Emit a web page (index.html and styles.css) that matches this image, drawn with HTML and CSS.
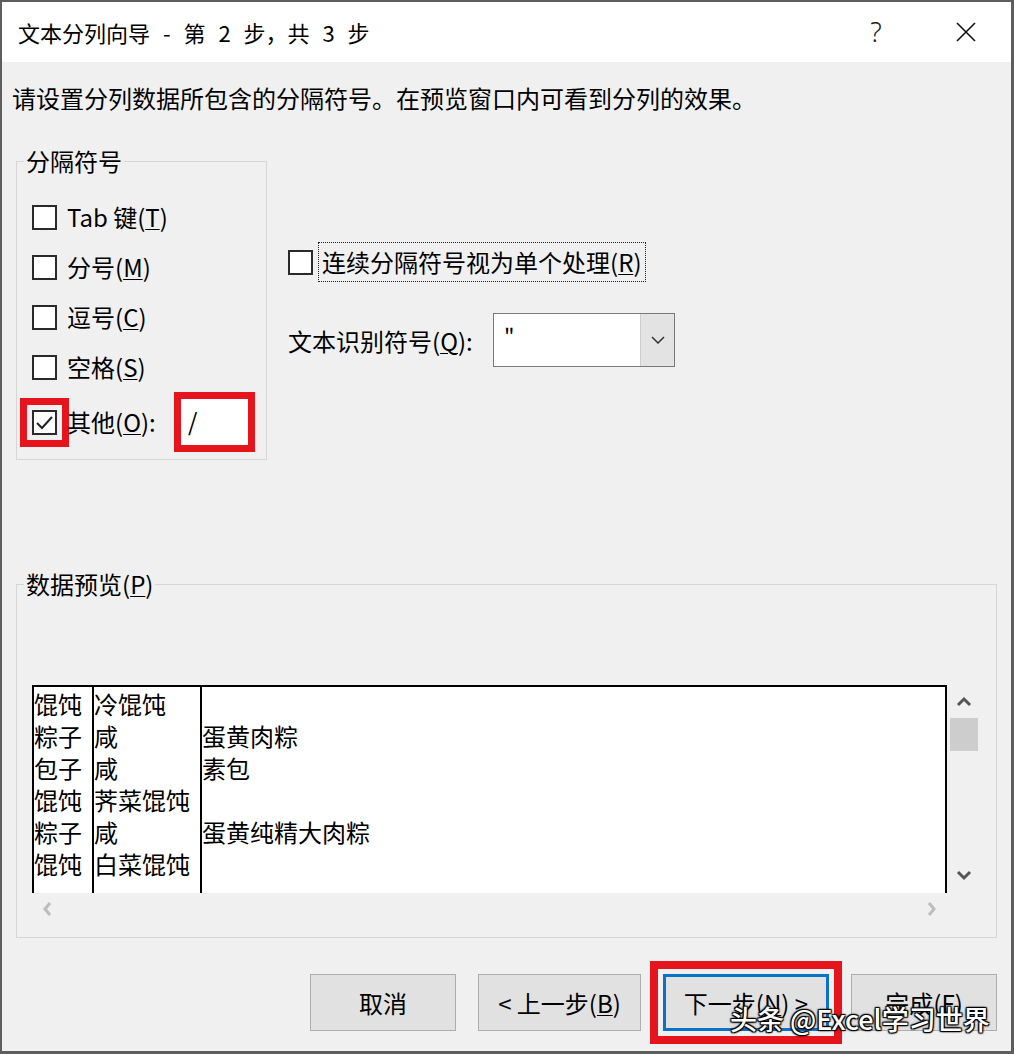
FILE: index.html
```html
<!DOCTYPE html>
<html lang="zh-CN">
<head>
    <meta charset="UTF-8">
    <meta name="viewport" content="width=device-width, initial-scale=1.0">
    <title>文本分列向导</title>
    <link rel="stylesheet" href="styles.css">
</head>
<body>
    <div class="dialog">
        <div class="titlebar">
            <span class="title">文本分列向导 - 第 2 步，共 3 步</span>
            <span class="help">?</span>
            <svg class="close" width="20" height="20" viewBox="0 0 20 20"><path d="M1 1 L19 19 M19 1 L1 19" stroke="#111" stroke-width="1.6" fill="none"/></svg>
        </div>

        <div class="body">
            <p class="hint">请设置分列数据所包含的分隔符号。在预览窗口内可看到分列的效果。</p>

            <div class="options">
                <fieldset class="delims">
                    <legend>分隔符号</legend>
                    <div class="check"><span class="box"></span><span>Tab 键(<u>T</u>)</span></div>
                    <div class="check"><span class="box"></span><span>分号(<u>M</u>)</span></div>
                    <div class="check"><span class="box"></span><span>逗号(<u>C</u>)</span></div>
                    <div class="check"><span class="box"></span><span>空格(<u>S</u>)</span></div>
                    <div class="check other">
                        <span class="box marked"><svg width="21" height="21" viewBox="0 0 21 21"><path d="M3 11 L8 16 L18 5" stroke="#222" stroke-width="2" fill="none"/></svg></span>
                        <span class="other-label">其他(<u>O</u>):</span>
                        <span class="other-input">/</span>
                    </div>
                </fieldset>

                <div class="side">
                    <div class="check consec"><span class="box"></span><span class="focus">连续分隔符号视为单个处理(<u>R</u>)</span></div>
                    <div class="qualifier">
                        <span class="q-label">文本识别符号(<u>Q</u>):</span>
                        <div class="combo">
                            <span class="val">"</span>
                            <span class="drop"><svg width="14" height="8" viewBox="0 0 14 8"><path d="M1 1 L7 7 L13 1" stroke="#333" stroke-width="1.5" fill="none"/></svg></span>
                        </div>
                    </div>
                </div>
            </div>

            <fieldset class="preview">
                <legend>数据预览(<u>P</u>)</legend>
                <div class="viewer">
                    <div class="grid">
                        <div class="col col-1">
                            <div>馄饨</div><div>粽子</div><div>包子</div><div>馄饨</div><div>粽子</div><div>馄饨</div>
                        </div>
                        <div class="col col-2">
                            <div>冷馄饨</div><div>咸</div><div>咸</div><div>荠菜馄饨</div><div>咸</div><div>白菜馄饨</div>
                        </div>
                        <div class="col col-3">
                            <div>&nbsp;</div><div>蛋黄肉粽</div><div>素包</div><div>&nbsp;</div><div>蛋黄纯精大肉粽</div><div>&nbsp;</div>
                        </div>
                    </div>
                    <div class="vscroll">
                        <svg width="16" height="12" viewBox="0 0 16 12"><path d="M2 9 L8 3 L14 9" stroke="#555" stroke-width="3" fill="none"/></svg>
                        <span class="thumb"></span>
                        <svg class="down" width="16" height="12" viewBox="0 0 16 12"><path d="M2 3 L8 9 L14 3" stroke="#555" stroke-width="3" fill="none"/></svg>
                    </div>
                    <div class="hscroll">
                        <svg width="10" height="16" viewBox="0 0 10 16"><path d="M8 2 L3 8 L8 14" stroke="#bdbdbd" stroke-width="3" fill="none"/></svg>
                        <svg width="10" height="16" viewBox="0 0 10 16"><path d="M2 2 L7 8 L2 14" stroke="#bdbdbd" stroke-width="3" fill="none"/></svg>
                    </div>
                    <div class="corner"></div>
                </div>
            </fieldset>

            <div class="buttons">
                <button class="btn w146">取消</button>
                <button class="btn w163">&lt; 上一步(<u>B</u>)</button>
                <button class="btn default">下一步(<u>N</u>) &gt;</button>
                <button class="btn w146">完成(<u>F</u>)</button>
            </div>
        </div>

        <div class="watermark">头条 @Excel学习世界</div>
    </div>
</body>
</html>
```

FILE: styles.css
```css
* { box-sizing: border-box; }
body { margin: 0; background: #f0f0f0; font-family: "Noto Sans CJK SC", "Noto Sans", sans-serif; color: #000; }
u { text-underline-offset: 2px; text-decoration-thickness: 1px; }

.dialog { position: relative; width: 1014px; height: 1054px; border: solid #5e5e5e; border-width: 2px 3px 3px 2px; background: #f0f0f0; overflow: hidden; }

/* title bar */
.titlebar { display: flex; align-items: center; height: 60px; background: #fff; padding-left: 16px; }
.title { flex: 1; font-size: 22px; line-height: 60px; word-spacing: 8px; }
.help { width: 30px; text-align: center; font-family: "Noto Sans", sans-serif; font-weight: 300; font-size: 27px; line-height: 60px; color: #222; }
.close { margin: 0 35px 0 65px; }

.body { padding: 0 14px 0 10px; }
.hint { margin: 20px 0 0; font-size: 24px; line-height: 32px; }

/* group boxes */
fieldset { margin: 0 0 0 4px; border: 1px solid #d6d6d6; min-width: 0; }
legend { font-size: 24px; line-height: 32px; padding: 0 2px; }

.options { display: flex; margin-top: 31px; }
.delims { width: 251px; padding: 0 0 7px 7px; }

.check { display: flex; align-items: center; gap: 10px; height: 50px; margin-left: 8px; font-size: 24px; line-height: 32px; }
.delims legend + .check { margin-top: 15px; }
.box { width: 25px; height: 25px; border: 2px solid #2a2a2a; background: #fff; display: flex; align-items: center; justify-content: center; flex: none; }
.box.marked { outline: 7px solid #e5141d; outline-offset: 5px; }

.check.other { height: 60px; }
.other-label { width: 97px; }
.other-input { width: 81px; height: 60px; border: 7px solid #e5141d; background: #fff; padding-left: 7px; line-height: 44px; font-size: 24px; }

.side { margin-left: 21px; padding-top: 97px; }
.check.consec { margin-left: 0; height: 40px; gap: 5px; }
.focus { height: 40px; line-height: 38px; padding: 0 3px; border: 1px dotted #222; }

.qualifier { display: flex; align-items: center; margin-top: 31px; font-size: 24px; }
.q-label { width: 205px; }
.combo { display: flex; width: 182px; height: 54px; border: 1px solid #7a7a7a; background: #fff; }
.combo .val { flex: 1; padding: 8px 0 0 10px; font-size: 22px; line-height: 30px; }
.combo .drop { width: 34px; background: #e3e3e3; border-left: 1px solid #cfcfcf; display: flex; align-items: center; justify-content: center; }

/* data preview */
.preview { margin-top: 108px; padding: 0 16px 12px 7px; }
.viewer { margin: 85px 0 0 8px; display: grid; grid-template-columns: 1fr 33px; grid-template-rows: 208px 32px; }
.grid { display: flex; background: #fff; border: 2px solid #000; border-bottom: 0; font-size: 24px; line-height: 32px; padding-top: 1px; }
.col { border-right: 2px solid #000; margin-top: -1px; padding-top: 1px; }
.col-1 { width: 60px; }
.col-2 { width: 108px; }
.col-3 { flex: 1; border-right: 0; }
.col div { white-space: nowrap; }

.vscroll { display: flex; flex-direction: column; align-items: center; padding: 11px 0 12px; }
.thumb { width: 28px; height: 33px; background: #cdcdcd; margin-top: 10px; }
.vscroll .down { margin-top: auto; }
.hscroll { display: flex; justify-content: space-between; align-items: center; padding: 0 10px; }

/* buttons */
.buttons { display: flex; justify-content: flex-end; gap: 22px; margin-top: 36px; }
.btn { height: 57px; background: #e1e1e1; border: 1px solid #adadad; font-family: inherit; font-size: 24px; color: #000; padding: 0; }
.w146 { width: 146px; }
.w163 { width: 163px; }
.btn.default { width: 166px; border: 3px solid #0a72c9; outline: 8px solid #e5141d; outline-offset: 5px; }

.watermark { position: absolute; left: 728px; top: 999px; font-size: 27px; line-height: 36px; font-weight: 500; color: #fff; white-space: nowrap; text-shadow: 1px 1px 1px #000, -1px -1px 1px #000, 1px -1px 1px #000, -1px 1px 1px #000, 0 0 3px #000; }
```
